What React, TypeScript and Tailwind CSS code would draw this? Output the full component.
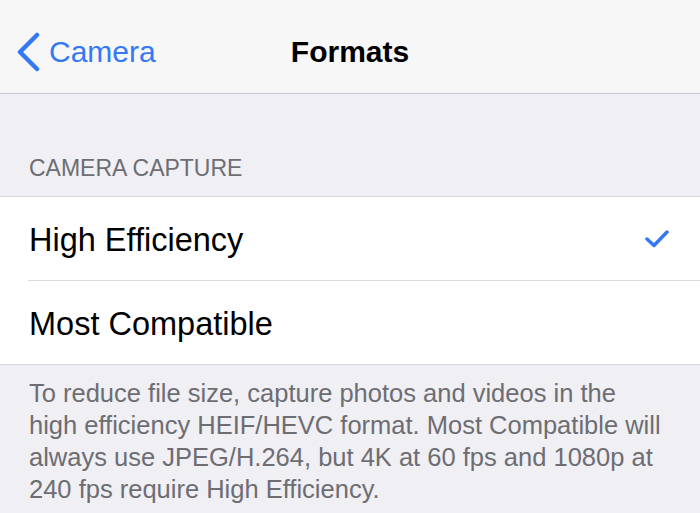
import React from "react";

export default function App() {
  return (
    <div
      className="w-[700px] h-[513px] overflow-hidden bg-[#efeff4] flex flex-col"
      style={{ fontFamily: '"Liberation Sans", Arial, sans-serif' }}
    >
      {/* Nav bar */}
      <div className="h-[94px] shrink-0 bg-[#f7f7f7] border-b border-[#c8c7cc] grid grid-cols-3 items-center pt-[10px]">
        <div className="flex items-center pl-[16px]">
          <svg width="24" height="40" viewBox="0 0 24 40" className="shrink-0">
            <polyline
              points="21,3 4,20 21,37"
              fill="none"
              stroke="#3478f6"
              strokeWidth="4.5"
              strokeLinecap="round"
              strokeLinejoin="round"
            />
          </svg>
          <span className="ml-[9px] text-[30px] leading-none text-[#3478f6]">Camera</span>
        </div>
        <div className="justify-self-center text-[30px] leading-none font-bold text-black whitespace-nowrap">
          Formats
        </div>
        <div />
      </div>

      {/* Section header */}
      <div className="h-[102px] shrink-0 flex items-end px-[29px] pb-[16px]">
        <span className="text-[23px] leading-none text-[#6d6d72]">CAMERA CAPTURE</span>
      </div>

      {/* List */}
      <div className="bg-white border-y border-[#d8d8dc] shrink-0">
        <div className="h-[83px] flex items-center justify-between pl-[29px] pr-[31px]">
          <span className="pt-[3px] text-[32.5px] leading-none text-black">High Efficiency</span>
          <svg width="24" height="18" viewBox="0 0 24 18">
            <polyline
              points="2,9 9,15.5 22,2"
              fill="none"
              stroke="#3478f6"
              strokeWidth="3.5"
              strokeLinecap="round"
              strokeLinejoin="round"
            />
          </svg>
        </div>
        <div className="ml-[28px] h-px bg-[#dcdce0]" />
        <div className="h-[83px] flex items-center pl-[29px]">
          <span className="pt-[3px] text-[32.5px] leading-none text-black">Most Compatible</span>
        </div>
      </div>

      {/* Footer */}
      <div className="px-[29px] pt-[12px] text-[25.5px] leading-[32px] text-[#6d6d72] whitespace-nowrap">
        To reduce file size, capture photos and videos in the
        <br />
        high efficiency HEIF/HEVC format. Most Compatible will
        <br />
        always use JPEG/H.264, but 4K at 60 fps and 1080p at
        <br />
        240 fps require High Efficiency.
      </div>
    </div>
  );
}
